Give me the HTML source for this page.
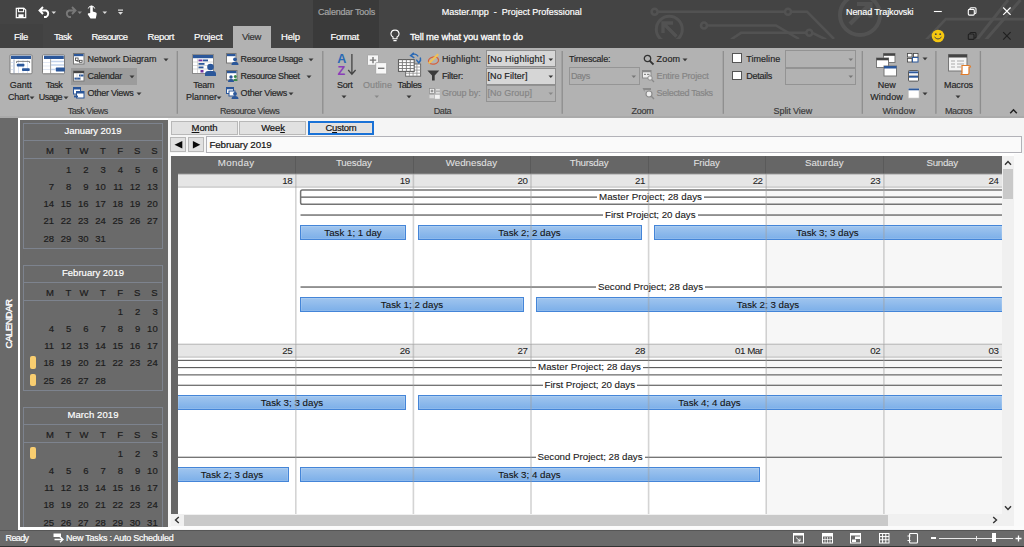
<!DOCTYPE html>
<html lang="en">
<head>
<meta charset="utf-8">
<title>Master.mpp - Project Professional</title>
<style>
html,body{margin:0;padding:0;}
body{width:1024px;height:547px;overflow:hidden;position:relative;background:#f5f5f5;font-family:"Liberation Sans", sans-serif;font-size:9px;}
.b{position:absolute;box-sizing:border-box;display:block;}
.t{position:absolute;white-space:pre;display:block;-webkit-text-stroke:0.18px;}
u{text-decoration:underline;}
</style>
</head>
<body>
<!-- title bar -->
<div class="b" style="left:0.00px;top:0.00px;width:1024.00px;height:48.00px;background:#444444;"></div>
<div class="b" style="left:0.00px;top:24.00px;width:43.00px;height:24.00px;background:#414141;"></div>
<div class="b" style="left:313.00px;top:0.00px;width:65.50px;height:48.00px;background:#3a3a3a;"></div>
<svg class="b" style="left:640.00px;top:0.00px" width="384" height="39" viewBox="640 0 384 39">
<g fill="none" stroke="#525252" stroke-width="2.6">
<path d="M657.600 11.700 H785 M791 11.700 H807 L834 39"/>
<path d="M707 25.500 H776 L799 39"/>
<path d="M731 39.500 L741 32.800 H806.300 M812.300 32.800 L826 39.500"/>
<circle cx="654.600" cy="11.700" r="3"/><circle cx="788" cy="11.700" r="3"/><circle cx="704" cy="25.500" r="3"/><circle cx="809.300" cy="32.800" r="3"/>
<circle cx="669.300" cy="29.300" r="13" stroke-width="3"/>
<path d="M676.500 36.500 L663.500 23.500 M663 33 V23 H673" stroke-width="3.400"/>
<circle cx="860" cy="15" r="20" stroke-width="4"/>
<path d="M850 24 L869 5 M857 4 H870.500 V17.500" stroke-width="4.200"/>
<path d="M926 40 L945.800 19.100 H1024"/>
<path d="M976.500 40 L1008 0 M985.600 40 L1020.500 0" stroke-width="3"/>
</g></svg>
<svg class="b" style="left:14.50px;top:6.50px" width="12" height="12" viewBox="0 0 14 14"><path d="M1.5 1.5 H10.5 L12.5 3.5 V12.5 H1.5 Z" fill="none" stroke="#fff" stroke-width="1.4"/><rect x="4" y="1.5" width="6" height="4" fill="none" stroke="#fff" stroke-width="1.2"/><rect x="4" y="8.5" width="6" height="4" fill="#fff"/></svg>
<svg class="b" style="left:38.00px;top:6.00px" width="14" height="12" viewBox="0 0 14 12"><path d="M5 1 L1.5 4.5 L5 8 M1.5 4.5 H8 A3.5 3.5 0 0 1 8 11 H6" fill="none" stroke="#fff" stroke-width="1.9"/></svg>
<svg class="b" style="left:51.20px;top:10.85px" width="5.6" height="3.8" viewBox="0 0 5.6 3.8"><path d="M0.5 0.5 L5.10 0.5 L2.80 3.10 Z" fill="#ddd"/></svg>
<svg class="b" style="left:63.00px;top:6.00px" width="14" height="12" viewBox="0 0 14 12"><path d="M9 1 L12.5 4.5 L9 8 M12.5 4.5 H6 A3.5 3.5 0 0 0 6 11 H8" fill="none" stroke="#787878" stroke-width="1.9"/></svg>
<svg class="b" style="left:76.70px;top:10.85px" width="5.6" height="3.8" viewBox="0 0 5.6 3.8"><path d="M0.5 0.5 L5.10 0.5 L2.80 3.10 Z" fill="#888"/></svg>
<svg class="b" style="left:86.00px;top:4.00px" width="12" height="16" viewBox="0 0 12 16"><path d="M4.2 9 V3 A1.3 1.3 0 0 1 6.8 3 V7.5 L10 8.5 Q11 9 10.6 10.5 L9.8 14.5 H4.5 L1.8 10.5 Q1.6 9 3 9.3 Z" fill="#fff"/><path d="M2.3 4.5 A3.3 3.3 0 0 1 8.7 4.5" fill="none" stroke="#fff" stroke-width="1"/></svg>
<svg class="b" style="left:102.20px;top:10.85px" width="5.6" height="3.8" viewBox="0 0 5.6 3.8"><path d="M0.5 0.5 L5.10 0.5 L2.80 3.10 Z" fill="#ddd"/></svg>
<svg class="b" style="left:117.00px;top:9.00px" width="7" height="7" viewBox="0 0 7 7"><rect x="1" y="0.5" width="5" height="1.2" fill="#ddd"/><path d="M1 3 H6 L3.5 5.8 Z" fill="#ddd"/></svg>
<span class="t" style="top:5.50px;height:13px;line-height:13px;font-size:9px;color:#a6a6a6;left:318.00px;letter-spacing:-0.205px;">Calendar Tools</span>
<span class="t" style="top:5.50px;height:13px;line-height:13px;font-size:9px;color:#ffffff;left:441.70px;letter-spacing:-0.002px;">Master.mpp  -  Project Professional</span>
<span class="t" style="top:5.50px;height:13px;line-height:13px;font-size:9px;color:#ffffff;left:846.00px;letter-spacing:-0.096px;">Nenad Trajkovski</span>
<svg class="b" style="left:932.00px;top:6.00px" width="12" height="12" viewBox="932 6 12 12"><path d="M933.900 11.500 H941.800" stroke="#fff" stroke-width="1.100"/></svg>
<svg class="b" style="left:966.00px;top:5.00px" width="13" height="13" viewBox="966 5 13 13"><rect x="968.300" y="9.400" width="6" height="5.700" rx="1" fill="none" stroke="#fff" stroke-width="1.100"/><path d="M970 9.400 V8.800 Q970 7.800 971 7.800 H975 Q976 7.800 976 8.800 V12.500 Q976 13.500 975 13.500 H974.300" fill="none" stroke="#fff" stroke-width="1.100"/></svg>
<svg class="b" style="left:1001.00px;top:5.00px" width="13" height="13" viewBox="1001 5 13 13"><path d="M1003.200 7.500 L1010.600 14.900 M1010.600 7.500 L1003.200 14.900" stroke="#fff" stroke-width="1.200"/></svg>
<svg class="b" style="left:930.80px;top:29.00px" width="14" height="14" viewBox="0 0 14 14"><circle cx="7" cy="7" r="6.300" fill="#f5c710"/><circle cx="4.8" cy="5.2" r="0.9" fill="#444"/><circle cx="9.2" cy="5.2" r="0.9" fill="#444"/><path d="M3.5 8 Q7 12 10.5 8" fill="none" stroke="#444" stroke-width="1"/></svg>
<svg class="b" style="left:966.00px;top:30.00px" width="13" height="13" viewBox="966 30 13 13"><rect x="968.300" y="34" width="5.700" height="5.400" rx="1" fill="none" stroke="#202020" stroke-width="1.100"/><path d="M970 34 V33.500 Q970 32.500 971 32.500 H975 Q976 32.500 976 33.500 V37 Q976 38 975 38 H974" fill="none" stroke="#202020" stroke-width="1.100"/></svg>
<svg class="b" style="left:1001.00px;top:30.00px" width="13" height="13" viewBox="1001 30 13 13"><path d="M1003.200 32.200 L1010.600 39.600 M1010.600 32.200 L1003.200 39.600" stroke="#202020" stroke-width="1.200"/></svg>
<div class="b" style="left:233.00px;top:26.00px;width:37.50px;height:22.00px;background:#b2b2b2;"></div>
<span class="t" style="top:30.00px;height:13px;line-height:13px;font-size:9.5px;color:#ffffff;left:14.00px;letter-spacing:-0.328px;">File</span>
<span class="t" style="top:30.00px;height:13px;line-height:13px;font-size:9.5px;color:#ffffff;left:54.00px;letter-spacing:-0.512px;">Task</span>
<span class="t" style="top:30.00px;height:13px;line-height:13px;font-size:9.5px;color:#ffffff;left:91.50px;letter-spacing:-0.584px;">Resource</span>
<span class="t" style="top:30.00px;height:13px;line-height:13px;font-size:9.5px;color:#ffffff;left:147.50px;letter-spacing:-0.336px;">Report</span>
<span class="t" style="top:30.00px;height:13px;line-height:13px;font-size:9.5px;color:#ffffff;left:194.00px;letter-spacing:-0.154px;">Project</span>
<span class="t" style="top:30.00px;height:13px;line-height:13px;font-size:9.5px;color:#ffffff;left:281.00px;letter-spacing:-0.137px;">Help</span>
<span class="t" style="top:30.00px;height:13px;line-height:13px;font-size:9.5px;color:#ffffff;left:330.50px;letter-spacing:-0.266px;">Format</span>
<span class="t" style="top:30.00px;height:13px;line-height:13px;font-size:9.5px;color:#333;left:242.00px;letter-spacing:-0.355px;">View</span>
<svg class="b" style="left:390.00px;top:29.00px" width="10" height="14" viewBox="0 0 10 14"><path d="M5 1.2 A3.6 3.6 0 0 1 7 8 V9.8 H3 V8 A3.6 3.6 0 0 1 5 1.2 Z M3.4 11.6 H6.6" fill="none" stroke="#fff" stroke-width="1.1"/></svg>
<span class="t" style="top:30.00px;height:13px;line-height:13px;font-size:9.5px;color:#ffffff;left:410.00px;letter-spacing:-0.157px;-webkit-text-stroke-width:0.3px;">Tell me what you want to do</span>
<!-- ribbon -->
<div class="b" style="left:0.00px;top:48.00px;width:1024.00px;height:69.60px;background:#b2b2b2;"></div>
<div class="b" style="left:0.00px;top:116.00px;width:1024.00px;height:1.60px;background:#aaaaaa;"></div>
<svg class="b" style="left:176.00px;top:51.00px" width="4" height="63" viewBox="176 51 4 63"><rect x="176.65" y="51" width="1.3" height="62.8" fill="#8d8d8d"/></svg>
<svg class="b" style="left:321.00px;top:51.00px" width="4" height="63" viewBox="321 51 4 63"><rect x="322.15" y="51" width="1.3" height="62.8" fill="#8d8d8d"/></svg>
<svg class="b" style="left:561.00px;top:51.00px" width="4" height="63" viewBox="561 51 4 63"><rect x="561.55" y="51" width="1.3" height="62.8" fill="#8d8d8d"/></svg>
<svg class="b" style="left:722.00px;top:51.00px" width="4" height="63" viewBox="722 51 4 63"><rect x="722.65" y="51" width="1.3" height="62.8" fill="#8d8d8d"/></svg>
<svg class="b" style="left:861.00px;top:51.00px" width="4" height="63" viewBox="861 51 4 63"><rect x="861.65" y="51" width="1.3" height="62.8" fill="#8d8d8d"/></svg>
<svg class="b" style="left:934.00px;top:51.00px" width="4" height="63" viewBox="934 51 4 63"><rect x="935.25" y="51" width="1.3" height="62.8" fill="#8d8d8d"/></svg>
<svg class="b" style="left:979.00px;top:51.00px" width="4" height="63" viewBox="979 51 4 63"><rect x="979.75" y="51" width="1.3" height="62.8" fill="#8d8d8d"/></svg>
<span class="t" style="top:104.70px;height:13px;line-height:13px;font-size:9px;color:#3a3a3a;left:67.80px;letter-spacing:-0.486px;">Task Views</span>
<span class="t" style="top:104.70px;height:13px;line-height:13px;font-size:9px;color:#3a3a3a;left:220.00px;letter-spacing:-0.384px;">Resource Views</span>
<span class="t" style="top:104.70px;height:13px;line-height:13px;font-size:9px;color:#3a3a3a;left:433.70px;letter-spacing:-0.379px;">Data</span>
<span class="t" style="top:104.70px;height:13px;line-height:13px;font-size:9px;color:#3a3a3a;left:631.50px;letter-spacing:-0.254px;">Zoom</span>
<span class="t" style="top:104.70px;height:13px;line-height:13px;font-size:9px;color:#3a3a3a;left:773.60px;letter-spacing:-0.086px;">Split View</span>
<span class="t" style="top:104.70px;height:13px;line-height:13px;font-size:9px;color:#3a3a3a;left:882.40px;letter-spacing:0.164px;">Window</span>
<span class="t" style="top:104.70px;height:13px;line-height:13px;font-size:9px;color:#3a3a3a;left:945.00px;letter-spacing:-0.419px;">Macros</span>
<svg class="b" style="left:1009.00px;top:108.00px" width="9" height="7" viewBox="0 0 9 7"><path d="M1.2 5.2 L4.5 1.8 L7.8 5.2" fill="none" stroke="#222" stroke-width="1.5"/></svg>
<svg class="b" style="left:8.00px;top:53.00px" width="26" height="23" viewBox="8 53 26 23"><rect x="10" y="54.800" width="22" height="19" rx="1" fill="#fff" stroke="#7c7c7c" stroke-width="1"/><rect x="11" y="55.700" width="20" height="3.300" fill="#2b579a"/>
<path d="M14 59.500 V73.500" stroke="#7a8aa8" stroke-width="0.800"/><path d="M11 62.500 H14 M11 66 H14 M11 69.500 H14 M18.500 60 V73 M23 60 V73 M27.500 60 V73" stroke="#c8d6ee" stroke-width="0.700"/>
<path d="M16.600 63 V61.400 H29.600 V63" fill="none" stroke="#666" stroke-width="0.800"/>
<rect x="16.800" y="63.800" width="7.600" height="2.800" rx="0.800" fill="#2b579a"/><rect x="22" y="68.300" width="7.700" height="2.800" rx="0.800" fill="#2b579a"/></svg>
<span class="t" style="top:78.50px;height:13px;line-height:13px;font-size:9px;color:#262626;left:20.70px;width:200px;margin-left:-100px;text-align:center;letter-spacing:-0.003px;">Gantt</span>
<span class="t" style="top:90.50px;height:13px;line-height:13px;font-size:9px;color:#262626;left:18.50px;width:200px;margin-left:-100px;text-align:center;letter-spacing:-0.203px;">Chart</span>
<svg class="b" style="left:29.00px;top:95.65px" width="6.0" height="4.0" viewBox="0 0 6.0 4.0"><path d="M0.5 0.5 L5.50 0.5 L3.00 3.30 Z" fill="#383838"/></svg>
<svg class="b" style="left:40.00px;top:53.00px" width="27" height="23" viewBox="40 53 27 23"><rect x="42.500" y="54.800" width="22" height="19" rx="1" fill="#fff" stroke="#7c7c7c" stroke-width="1"/><rect x="44" y="55.700" width="19.800" height="3.300" fill="#2b579a"/>
<path d="M50.600 59.200 V73.500" stroke="#8a8a8a" stroke-width="0.800"/>
<path d="M51 61.500 H64 M51 65 H64 M51 69.500 H55.500" stroke="#c3d3ec" stroke-width="1.400"/><path d="M43 62.500 H50 M43 66 H50 M43 69.500 H50" stroke="#d5dff0" stroke-width="0.700"/>
<rect x="55.800" y="67.600" width="9" height="3.800" rx="0.600" fill="#2b579a"/></svg>
<span class="t" style="top:78.50px;height:13px;line-height:13px;font-size:9px;color:#262626;left:54.00px;width:200px;margin-left:-100px;text-align:center;letter-spacing:-0.504px;">Task</span>
<span class="t" style="top:90.50px;height:13px;line-height:13px;font-size:9px;color:#262626;left:50.40px;width:200px;margin-left:-100px;text-align:center;letter-spacing:-0.543px;">Usage</span>
<svg class="b" style="left:63.30px;top:95.65px" width="6.0" height="4.0" viewBox="0 0 6.0 4.0"><path d="M0.5 0.5 L5.50 0.5 L3.00 3.30 Z" fill="#383838"/></svg>
<div class="b" style="left:71.00px;top:68.00px;width:66.00px;height:16.50px;background:#9c9c9c;"></div>
<svg class="b" style="left:73.00px;top:53.00px" width="12" height="12" viewBox="0 0 12 12"><rect x="0.5" y="0.5" width="10.5" height="10.5" fill="#fff" stroke="#777"/><rect x="1" y="1" width="9.5" height="2.2" fill="#2b579a"/><rect x="2.5" y="5" width="2.6" height="2.4" fill="none" stroke="#444" stroke-width="0.8"/><rect x="6.5" y="7.3" width="2.6" height="2" fill="none" stroke="#444" stroke-width="0.8"/><path d="M3.8 7.4 V8.3 H6.5" fill="none" stroke="#444" stroke-width="0.7"/></svg>
<span class="t" style="top:52.70px;height:13px;line-height:13px;font-size:9px;color:#262626;left:87.50px;letter-spacing:-0.035px;">Network Diagram</span>
<svg class="b" style="left:163.00px;top:57.85px" width="6.0" height="4.0" viewBox="0 0 6.0 4.0"><path d="M0.5 0.5 L5.50 0.5 L3.00 3.30 Z" fill="#383838"/></svg>
<svg class="b" style="left:73.00px;top:70.00px" width="12" height="12" viewBox="0 0 12 12"><rect x="0.5" y="1" width="10.5" height="10" fill="#fff" stroke="#777"/><rect x="0.5" y="1" width="10.5" height="2.2" fill="#444"/><rect x="6" y="4.5" width="4.5" height="2" fill="#2b579a"/><rect x="1.5" y="7.6" width="6" height="2" fill="#2b579a"/><path d="M4 3 V11 M7.5 3 V11" stroke="#bbb" stroke-width="0.5"/></svg>
<span class="t" style="top:69.90px;height:13px;line-height:13px;font-size:9px;color:#262626;left:87.50px;letter-spacing:-0.254px;">Calendar</span>
<svg class="b" style="left:128.50px;top:75.05px" width="6.0" height="4.0" viewBox="0 0 6.0 4.0"><path d="M0.5 0.5 L5.50 0.5 L3.00 3.30 Z" fill="#383838"/></svg>
<svg class="b" style="left:73.00px;top:87.00px" width="12" height="12" viewBox="0 0 12 12"><rect x="0.5" y="0.5" width="7" height="6.5" fill="#fff" stroke="#2b579a"/><rect x="0.5" y="0.5" width="7" height="2" fill="#2b579a"/><rect x="3.5" y="4.5" width="7.5" height="6.5" fill="#fff" stroke="#2b579a"/><rect x="3.5" y="4.5" width="7.5" height="2" fill="#2b579a"/><rect x="1" y="8.6" width="4" height="1.8" fill="#2b579a"/></svg>
<span class="t" style="top:87.10px;height:13px;line-height:13px;font-size:9px;color:#262626;left:87.50px;letter-spacing:-0.260px;">Other Views</span>
<svg class="b" style="left:135.70px;top:92.25px" width="6.0" height="4.0" viewBox="0 0 6.0 4.0"><path d="M0.5 0.5 L5.50 0.5 L3.00 3.30 Z" fill="#383838"/></svg>
<svg class="b" style="left:191.50px;top:54.00px" width="24" height="22" viewBox="0 0 24 22"><rect x="0.5" y="0.5" width="21" height="19" fill="#fff" stroke="#8a8a8a"/><rect x="1" y="1" width="20" height="3.2" fill="#2b579a"/>
<path d="M5.5 4.5 V19 M1 8 H21 M1 11.5 H21 M1 15 H21" stroke="#c9c9c9" stroke-width="0.7"/>
<rect x="6.5" y="5.5" width="4" height="1.8" fill="#7030a0"/><rect x="11" y="5.5" width="5" height="1.8" fill="#2b579a"/><rect x="6.5" y="9" width="6" height="1.8" fill="#2b579a"/><rect x="6.5" y="12.5" width="5" height="1.8" fill="#2b579a"/><rect x="8.5" y="16" width="3" height="2.5" fill="#7030a0"/>
<circle cx="18.5" cy="13" r="3.3" fill="#2b579a"/><path d="M13 22 V20 Q13 17 16 17 H21 Q24 17 24 20 V22 Z" fill="#2b579a"/></svg>
<span class="t" style="top:78.50px;height:13px;line-height:13px;font-size:9px;color:#262626;left:203.80px;width:200px;margin-left:-100px;text-align:center;letter-spacing:-0.254px;">Team</span>
<span class="t" style="top:90.50px;height:13px;line-height:13px;font-size:9px;color:#262626;left:201.50px;width:200px;margin-left:-100px;text-align:center;letter-spacing:-0.004px;">Planner</span>
<svg class="b" style="left:216.30px;top:95.65px" width="6.0" height="4.0" viewBox="0 0 6.0 4.0"><path d="M0.5 0.5 L5.50 0.5 L3.00 3.30 Z" fill="#383838"/></svg>
<svg class="b" style="left:226.00px;top:53.00px" width="13" height="12" viewBox="0 0 13 12"><rect x="0.5" y="0.5" width="9.5" height="9.5" fill="#fff" stroke="#777"/><rect x="1" y="1" width="8.5" height="2.2" fill="#2b579a"/><circle cx="9" cy="6.3" r="1.9" fill="#2b579a"/><path d="M5.5 12 Q5.5 8.7 9 8.7 Q12.5 8.700 12.5 12 Z" fill="#2b579a"/></svg>
<span class="t" style="top:52.70px;height:13px;line-height:13px;font-size:9px;color:#262626;left:240.60px;letter-spacing:-0.360px;">Resource Usage</span>
<svg class="b" style="left:308.40px;top:57.85px" width="6.0" height="4.0" viewBox="0 0 6.0 4.0"><path d="M0.5 0.5 L5.50 0.5 L3.00 3.30 Z" fill="#383838"/></svg>
<svg class="b" style="left:226.00px;top:70.00px" width="13" height="12" viewBox="0 0 13 12"><rect x="0.5" y="0.5" width="10.5" height="9.5" fill="#fff" stroke="#777"/><rect x="1" y="1" width="9.500" height="2.2" fill="#2b579a"/><circle cx="5" cy="7" r="1.7" fill="#2b579a"/><path d="M2 12 Q2 9 5 9 Q8 9 8 12 Z" fill="#2b579a"/><circle cx="9.3" cy="6.5" r="1.5" fill="#3a8a4a"/><path d="M7.500 11 Q7.5 8.5 9.5 8.5 Q11.5 8.5 11.5 11 Z" fill="#3a8a4a"/></svg>
<span class="t" style="top:69.90px;height:13px;line-height:13px;font-size:9px;color:#262626;left:240.60px;letter-spacing:-0.396px;">Resource Sheet</span>
<svg class="b" style="left:306.40px;top:75.05px" width="6.0" height="4.0" viewBox="0 0 6.0 4.0"><path d="M0.5 0.5 L5.50 0.5 L3.00 3.30 Z" fill="#383838"/></svg>
<svg class="b" style="left:226.00px;top:87.00px" width="13" height="12" viewBox="0 0 13 12"><rect x="0.5" y="0.5" width="7" height="6" fill="#fff" stroke="#2b579a"/><rect x="0.5" y="0.5" width="7" height="1.800" fill="#2b579a"/><rect x="3" y="4" width="6" height="5" fill="#fff" stroke="#2b579a"/><circle cx="9" cy="6.8" r="1.9" fill="#2b579a"/><path d="M5.5 12 Q5.5 9 9 9 Q12.5 9 12.5 12 Z" fill="#2b579a"/></svg>
<span class="t" style="top:87.10px;height:13px;line-height:13px;font-size:9px;color:#262626;left:240.60px;letter-spacing:-0.214px;">Other Views</span>
<svg class="b" style="left:288.40px;top:92.25px" width="6.0" height="4.0" viewBox="0 0 6.0 4.0"><path d="M0.5 0.5 L5.50 0.5 L3.00 3.30 Z" fill="#383838"/></svg>
<svg class="b" style="left:336.00px;top:52.00px" width="22" height="25" viewBox="336 52 22 25"><text x="337.2" y="63.4" font-size="12.6" font-weight="bold" fill="#2a69b5" font-family="Liberation Sans, sans-serif">A</text><text x="337.6" y="74.8" font-size="12.6" font-weight="bold" fill="#8a3db8" font-family="Liberation Sans, sans-serif">Z</text><path d="M351.9 54 V73.8 M348.2 70 L351.9 74.2 L355.6 70" fill="none" stroke="#444" stroke-width="1.3"/></svg>
<span class="t" style="top:78.50px;height:13px;line-height:13px;font-size:9px;color:#262626;left:344.80px;width:200px;margin-left:-100px;text-align:center;letter-spacing:-0.254px;">Sort</span>
<svg class="b" style="left:341.20px;top:94.75px" width="6.0" height="4.0" viewBox="0 0 6.0 4.0"><path d="M0.5 0.5 L5.50 0.5 L3.00 3.30 Z" fill="#383838"/></svg>
<svg class="b" style="left:366.00px;top:53.00px" width="23" height="23" viewBox="366 53 23 23"><rect x="367.5" y="54.9" width="11" height="10.4" rx="0.8" fill="#f6f6f6" stroke="#a4a4a4" stroke-width="0.9"/><path d="M369.8 60.1 H376.2 M373 56.9 V63.3" stroke="#777" stroke-width="1.4"/><rect x="375.7" y="62.6" width="11" height="11.4" rx="0.8" fill="#f8f8f8" stroke="#a4a4a4" stroke-width="0.9"/><path d="M378 68.3 H384.4" stroke="#777" stroke-width="1.4"/></svg>
<span class="t" style="top:78.50px;height:13px;line-height:13px;font-size:9px;color:#858585;left:377.50px;width:200px;margin-left:-100px;text-align:center;letter-spacing:0.067px;">Outline</span>
<svg class="b" style="left:373.90px;top:94.85px" width="5.6" height="3.8" viewBox="0 0 5.6 3.8"><path d="M0.5 0.5 L5.10 0.5 L2.80 3.10 Z" fill="#888"/></svg>
<svg class="b" style="left:397.00px;top:51.00px" width="26" height="27" viewBox="397 51 26 27"><rect x="405.6" y="64" width="15" height="12.2" fill="#fff" stroke="#6a6a6a" stroke-width="1"/><path d="M405.600 67 H420.600 M405.600 70.100 H420.600 M405.600 73.200 H420.600 M409.400 64 V76.200 M413.100 64 V76.200 M416.900 64 V76.200" stroke="#8a8a8a" stroke-width="0.800"/>
<rect x="398.500" y="59.600" width="15.700" height="11.800" fill="#fff" stroke="#5e5e5e" stroke-width="1.100"/><path d="M398.500 62.600 H414.200 M398.500 65.500 H414.200 M398.500 68.500 H414.200 M402.400 59.600 V71.400 M406.400 59.600 V71.400 M410.300 59.600 V71.400" stroke="#777" stroke-width="0.900"/>
<path d="M411.200 55.600 Q415 52.300 418.200 56.400 M413.800 52.800 L410.600 55.700 L414.300 57.800 M420.300 57.500 Q421.200 61.200 418.800 62.600 M416.300 59.600 L418.700 62.800 L421 60" fill="none" stroke="#2a69b5" stroke-width="1.400"/></svg>
<span class="t" style="top:78.50px;height:13px;line-height:13px;font-size:9px;color:#262626;left:409.50px;width:200px;margin-left:-100px;text-align:center;letter-spacing:-0.336px;">Tables</span>
<svg class="b" style="left:406.00px;top:94.75px" width="6.0" height="4.0" viewBox="0 0 6.0 4.0"><path d="M0.5 0.5 L5.50 0.5 L3.00 3.30 Z" fill="#383838"/></svg>
<svg class="b" style="left:426.00px;top:52.00px" width="15" height="14" viewBox="426 52 15 14"><ellipse cx="433.500" cy="60.600" rx="5.100" ry="3.500" fill="none" stroke="#d6613c" stroke-width="1.300" transform="rotate(-12 433.500 60.600)"/><path d="M428.800 63.300 L438.200 54.200" stroke="#f1c255" stroke-width="2.100"/></svg>
<span class="t" style="top:52.70px;height:13px;line-height:13px;font-size:9px;color:#262626;left:441.90px;letter-spacing:0.187px;">Highlight:</span>
<svg class="b" style="left:426.00px;top:69.00px" width="15" height="13" viewBox="426 69 15 13"><path d="M427.400 70.500 H439.300 L434.700 75.600 V80.600 H432 V75.600 Z" fill="#3a3a3a"/></svg>
<span class="t" style="top:69.90px;height:13px;line-height:13px;font-size:9px;color:#262626;left:441.90px;letter-spacing:-0.200px;">Filter:</span>
<svg class="b" style="left:428.00px;top:87.00px" width="14" height="13" viewBox="428 87 14 13"><rect x="429.500" y="88.500" width="5" height="5" fill="#ececec" stroke="#8a8a8a" stroke-width="0.700"/><path d="M430.600 91 H433.400 M432 89.600 V92.400" stroke="#666" stroke-width="0.800"/><rect x="436" y="89" width="3.800" height="1.500" fill="#dcdcdc"/><rect x="436" y="92" width="3.800" height="1.500" fill="#dcdcdc"/><rect x="429.500" y="95" width="4.500" height="3.300" fill="#d8d8d8"/><rect x="434.800" y="94.800" width="5" height="4" fill="#f2f2f2"/></svg>
<span class="t" style="top:87.10px;height:13px;line-height:13px;font-size:9px;color:#858585;left:441.90px;letter-spacing:-0.092px;">Group by:</span>
<div class="b" style="left:485.60px;top:50.40px;width:70.80px;height:16.70px;background:#d6d6d6;border:1px solid #8e8e8e;"></div>
<span class="t" style="top:52.70px;height:13px;line-height:13px;font-size:9px;color:#222;left:487.50px;letter-spacing:0.269px;">[No Highlight]</span>
<svg class="b" style="left:548.20px;top:57.95px" width="5.6" height="3.8" viewBox="0 0 5.6 3.8"><path d="M0.5 0.5 L5.10 0.5 L2.80 3.10 Z" fill="#333"/></svg>
<div class="b" style="left:485.60px;top:68.00px;width:70.80px;height:16.50px;background:#d6d6d6;border:1px solid #8e8e8e;"></div>
<span class="t" style="top:69.90px;height:13px;line-height:13px;font-size:9px;color:#222;left:487.50px;letter-spacing:0.089px;">[No Filter]</span>
<svg class="b" style="left:548.20px;top:75.15px" width="5.6" height="3.8" viewBox="0 0 5.6 3.8"><path d="M0.5 0.5 L5.10 0.5 L2.80 3.10 Z" fill="#333"/></svg>
<div class="b" style="left:485.60px;top:85.40px;width:70.80px;height:16.30px;background:#b2b2b2;border:1px solid #929292;"></div>
<span class="t" style="top:87.10px;height:13px;line-height:13px;font-size:9px;color:#858585;left:487.50px;letter-spacing:0.047px;">[No Group]</span>
<svg class="b" style="left:548.20px;top:92.35px" width="5.6" height="3.8" viewBox="0 0 5.6 3.8"><path d="M0.5 0.5 L5.10 0.5 L2.80 3.10 Z" fill="#888"/></svg>
<span class="t" style="top:52.70px;height:13px;line-height:13px;font-size:9px;color:#262626;left:569.00px;letter-spacing:-0.189px;">Timescale:</span>
<div class="b" style="left:568.60px;top:67.40px;width:71.10px;height:17.20px;background:#b2b2b2;border:1px solid #959595;"></div>
<span class="t" style="top:69.90px;height:13px;line-height:13px;font-size:9px;color:#808080;left:571.00px;letter-spacing:-0.454px;">Days</span>
<svg class="b" style="left:631.40px;top:75.15px" width="5.6" height="3.8" viewBox="0 0 5.6 3.8"><path d="M0.5 0.5 L5.10 0.5 L2.80 3.10 Z" fill="#777"/></svg>
<svg class="b" style="left:643.00px;top:53.50px" width="12" height="12" viewBox="0 0 12 12"><circle cx="4.500" cy="4.500" r="3.200" fill="none" stroke="#333" stroke-width="1.300"/><path d="M6.800 6.800 L10.500 10.500" stroke="#333" stroke-width="1.800"/></svg>
<span class="t" style="top:52.70px;height:13px;line-height:13px;font-size:9px;color:#262626;left:656.60px;letter-spacing:0.171px;">Zoom</span>
<svg class="b" style="left:681.50px;top:57.85px" width="6.0" height="4.0" viewBox="0 0 6.0 4.0"><path d="M0.5 0.5 L5.50 0.5 L3.00 3.30 Z" fill="#383838"/></svg>
<svg class="b" style="left:642.00px;top:70.00px" width="13" height="13" viewBox="0 0 13 13"><rect x="0.500" y="0.500" width="8.500" height="7.500" fill="#eee" stroke="#8a8a8a"/><rect x="0.5" y="0.500" width="8.500" height="1.800" fill="#8a8a8a"/><rect x="2" y="3.800" width="2" height="1.200" fill="#888"/><rect x="5" y="3.800" width="2.500" height="1.200" fill="#888"/><circle cx="8" cy="8" r="2.200" fill="#eee" stroke="#8a8a8a"/><path d="M9.800 9.800 L12 12" stroke="#8a8a8a" stroke-width="1.300"/></svg>
<span class="t" style="top:69.90px;height:13px;line-height:13px;font-size:9px;color:#858585;left:656.60px;letter-spacing:-0.138px;">Entire Project</span>
<svg class="b" style="left:642.00px;top:87.00px" width="13" height="13" viewBox="0 0 13 13"><path d="M0.500 1 H9 V3 H2.500 V5 Z" fill="#8a8a8a"/><circle cx="7" cy="7" r="3" fill="#eee" stroke="#8a8a8a" stroke-width="1.200"/><path d="M9.300 9.300 L12 12" stroke="#8a8a8a" stroke-width="1.500"/></svg>
<span class="t" style="top:87.10px;height:13px;line-height:13px;font-size:9px;color:#858585;left:656.60px;letter-spacing:-0.298px;">Selected Tasks</span>
<div class="b" style="left:731.90px;top:53.40px;width:10.00px;height:9.70px;background:#ffffff;border:1px solid #555;"></div>
<span class="t" style="top:52.70px;height:13px;line-height:13px;font-size:9px;color:#262626;left:746.25px;letter-spacing:0.039px;">Timeline</span>
<div class="b" style="left:731.90px;top:70.60px;width:10.00px;height:9.70px;background:#ffffff;border:1px solid #555;"></div>
<span class="t" style="top:69.90px;height:13px;line-height:13px;font-size:9px;color:#262626;left:746.25px;letter-spacing:-0.245px;">Details</span>
<div class="b" style="left:785.30px;top:50.00px;width:71.20px;height:17.60px;background:#b2b2b2;border:1px solid #939393;"></div>
<svg class="b" style="left:848.20px;top:57.95px" width="5.6" height="3.8" viewBox="0 0 5.6 3.8"><path d="M0.5 0.5 L5.10 0.5 L2.80 3.10 Z" fill="#777"/></svg>
<div class="b" style="left:785.30px;top:67.60px;width:71.20px;height:17.40px;background:#b2b2b2;border:1px solid #939393;"></div>
<svg class="b" style="left:848.20px;top:75.15px" width="5.6" height="3.8" viewBox="0 0 5.6 3.8"><path d="M0.5 0.5 L5.10 0.5 L2.80 3.10 Z" fill="#777"/></svg>
<svg class="b" style="left:876.00px;top:53.00px" width="22" height="24" viewBox="0 0 22 24"><rect x="7.500" y="0.500" width="11.500" height="9" fill="#fff" stroke="#777"/><rect x="7.500" y="0.500" width="11.500" height="2.300" fill="#444"/>
<rect x="0.500" y="5" width="12" height="9.500" fill="#fff" stroke="#777"/><rect x="0.500" y="5" width="12" height="2.300" fill="#444"/>
<rect x="8" y="13" width="12.500" height="10" fill="#fff" stroke="#777"/><rect x="8" y="13" width="12.500" height="2.500" fill="#2b579a"/></svg>
<span class="t" style="top:78.50px;height:13px;line-height:13px;font-size:9px;color:#262626;left:886.70px;width:200px;margin-left:-100px;text-align:center;letter-spacing:-0.005px;">New</span>
<span class="t" style="top:90.50px;height:13px;line-height:13px;font-size:9px;color:#262626;left:886.60px;width:200px;margin-left:-100px;text-align:center;letter-spacing:0.131px;">Window</span>
<svg class="b" style="left:907.00px;top:53.00px" width="13" height="11" viewBox="0 0 13 11"><rect x="0.500" y="0.500" width="4.500" height="3.500" fill="#fff" stroke="#444" stroke-width="0.800"/><rect x="6.500" y="0.500" width="4.500" height="3.500" fill="#fff" stroke="#444" stroke-width="0.800"/><rect x="0.500" y="5.500" width="4.500" height="3.500" fill="#fff" stroke="#444" stroke-width="0.800"/><rect x="5.500" y="4.500" width="5.500" height="4.500" fill="#fff" stroke="#2b579a" stroke-width="1"/></svg>
<svg class="b" style="left:921.60px;top:56.75px" width="6.0" height="4.0" viewBox="0 0 6.0 4.0"><path d="M0.5 0.5 L5.50 0.5 L3.00 3.30 Z" fill="#383838"/></svg>
<svg class="b" style="left:908.00px;top:69.50px" width="12" height="12" viewBox="0 0 12 12"><rect x="0.5" y="0.5" width="10" height="10.6" rx="0.8" fill="#fff" stroke="#4c4c4c" stroke-width="0.9"/><rect x="1" y="1.4" width="9" height="1.9" fill="#2b579a"/><rect x="1" y="5.8" width="9" height="1.900" fill="#2b579a"/><path d="M0.500 5.300 H10.500" stroke="#777" stroke-width="0.500"/></svg>
<svg class="b" style="left:907.50px;top:87.50px" width="12" height="12" viewBox="0 0 12 12"><rect x="0.500" y="0.500" width="10.500" height="9.500" fill="#fff" stroke="#ccc" stroke-width="0.600"/><rect x="0.500" y="0.500" width="10.500" height="1.800" fill="#2b579a"/></svg>
<svg class="b" style="left:921.60px;top:91.55px" width="6.0" height="4.0" viewBox="0 0 6.0 4.0"><path d="M0.5 0.5 L5.50 0.5 L3.00 3.30 Z" fill="#383838"/></svg>
<svg class="b" style="left:947.50px;top:54.00px" width="24" height="21" viewBox="0 0 24 21"><rect x="0.500" y="0.500" width="18.500" height="16.500" fill="#f4f4f4" stroke="#777"/><rect x="0.500" y="0.500" width="18.500" height="3" fill="#444"/>
<path d="M3 7 H7 M9 7 H16 M3 10 H7 M9 10 H16 M3 13 H7 M9 13 H13" stroke="#aaa" stroke-width="1"/>
<path d="M14 11.500 H21 Q22.500 11.500 22.500 13 H21 V19 Q21 20.500 19.500 20.500 H12.500 Q14 20.500 14 19 Z" fill="#fff" stroke="#e07a28" stroke-width="1.200"/></svg>
<span class="t" style="top:78.50px;height:13px;line-height:13px;font-size:9px;color:#262626;left:958.50px;width:200px;margin-left:-100px;text-align:center;letter-spacing:-0.086px;">Macros</span>
<svg class="b" style="left:955.20px;top:94.75px" width="6.0" height="4.0" viewBox="0 0 6.0 4.0"><path d="M0.5 0.5 L5.50 0.5 L3.00 3.30 Z" fill="#383838"/></svg>
<!-- side bar -->
<div class="b" style="left:0.00px;top:117.60px;width:1024.00px;height:412.00px;background:#6a6a6a;"></div>
<div class="b" style="left:18.00px;top:117.60px;width:152.60px;height:412.00px;background:#ffffff;"></div>
<div class="b" style="left:20.20px;top:120.10px;width:147.60px;height:406.90px;background:#6a6a6a;"></div>
<div class="b" style="left:167.80px;top:117.60px;width:856.20px;height:412.00px;background:#f5f5f5;"></div>
<span class="t" style="top:316.80px;height:14px;line-height:14px;font-size:9.75px;color:#ffffff;left:9.30px;width:200px;margin-left:-100px;text-align:center;letter-spacing:-0.514px;transform:rotate(-90deg);-webkit-text-stroke-width:0.35px;">CALENDAR</span>
<div class="b" style="left:23.00px;top:123.00px;width:140.00px;height:125.50px;border:1px solid #7d838e;"></div>
<div class="b" style="left:23.00px;top:140.00px;width:140.00px;height:1.00px;background:#7d838e;"></div>
<div class="b" style="left:23.00px;top:158.00px;width:140.00px;height:1.00px;background:#7d838e;"></div>
<span class="t" style="top:124.20px;height:13px;line-height:13px;font-size:9.5px;color:#ffffff;left:93.00px;width:200px;margin-left:-100px;text-align:center;letter-spacing:-0.048px;">January 2019</span>
<span class="t" style="top:143.70px;height:13px;line-height:13px;font-size:9.5px;color:#1c1c1c;left:54.00px;width:200px;margin-left:-200px;text-align:right;">M</span>
<span class="t" style="top:143.70px;height:13px;line-height:13px;font-size:9.5px;color:#1c1c1c;left:71.28px;width:200px;margin-left:-200px;text-align:right;">T</span>
<span class="t" style="top:143.70px;height:13px;line-height:13px;font-size:9.5px;color:#1c1c1c;left:88.56px;width:200px;margin-left:-200px;text-align:right;">W</span>
<span class="t" style="top:143.70px;height:13px;line-height:13px;font-size:9.5px;color:#1c1c1c;left:105.84px;width:200px;margin-left:-200px;text-align:right;">T</span>
<span class="t" style="top:143.70px;height:13px;line-height:13px;font-size:9.5px;color:#1c1c1c;left:123.12px;width:200px;margin-left:-200px;text-align:right;">F</span>
<span class="t" style="top:143.70px;height:13px;line-height:13px;font-size:9.5px;color:#1c1c1c;left:140.40px;width:200px;margin-left:-200px;text-align:right;">S</span>
<span class="t" style="top:143.70px;height:13px;line-height:13px;font-size:9.5px;color:#1c1c1c;left:157.68px;width:200px;margin-left:-200px;text-align:right;">S</span>
<span class="t" style="top:162.70px;height:13px;line-height:13px;font-size:9.5px;color:#1c1c1c;left:71.28px;width:200px;margin-left:-200px;text-align:right;">1</span>
<span class="t" style="top:162.70px;height:13px;line-height:13px;font-size:9.5px;color:#1c1c1c;left:88.56px;width:200px;margin-left:-200px;text-align:right;">2</span>
<span class="t" style="top:162.70px;height:13px;line-height:13px;font-size:9.5px;color:#1c1c1c;left:105.84px;width:200px;margin-left:-200px;text-align:right;">3</span>
<span class="t" style="top:162.70px;height:13px;line-height:13px;font-size:9.5px;color:#1c1c1c;left:123.12px;width:200px;margin-left:-200px;text-align:right;">4</span>
<span class="t" style="top:162.70px;height:13px;line-height:13px;font-size:9.5px;color:#1c1c1c;left:140.40px;width:200px;margin-left:-200px;text-align:right;">5</span>
<span class="t" style="top:162.70px;height:13px;line-height:13px;font-size:9.5px;color:#1c1c1c;left:157.68px;width:200px;margin-left:-200px;text-align:right;">6</span>
<span class="t" style="top:179.95px;height:13px;line-height:13px;font-size:9.5px;color:#1c1c1c;left:54.00px;width:200px;margin-left:-200px;text-align:right;">7</span>
<span class="t" style="top:179.95px;height:13px;line-height:13px;font-size:9.5px;color:#1c1c1c;left:71.28px;width:200px;margin-left:-200px;text-align:right;">8</span>
<span class="t" style="top:179.95px;height:13px;line-height:13px;font-size:9.5px;color:#1c1c1c;left:88.56px;width:200px;margin-left:-200px;text-align:right;">9</span>
<span class="t" style="top:179.95px;height:13px;line-height:13px;font-size:9.5px;color:#1c1c1c;left:105.84px;width:200px;margin-left:-200px;text-align:right;">10</span>
<span class="t" style="top:179.95px;height:13px;line-height:13px;font-size:9.5px;color:#1c1c1c;left:123.12px;width:200px;margin-left:-200px;text-align:right;">11</span>
<span class="t" style="top:179.95px;height:13px;line-height:13px;font-size:9.5px;color:#1c1c1c;left:140.40px;width:200px;margin-left:-200px;text-align:right;">12</span>
<span class="t" style="top:179.95px;height:13px;line-height:13px;font-size:9.5px;color:#1c1c1c;left:157.68px;width:200px;margin-left:-200px;text-align:right;">13</span>
<span class="t" style="top:197.20px;height:13px;line-height:13px;font-size:9.5px;color:#1c1c1c;left:54.00px;width:200px;margin-left:-200px;text-align:right;">14</span>
<span class="t" style="top:197.20px;height:13px;line-height:13px;font-size:9.5px;color:#1c1c1c;left:71.28px;width:200px;margin-left:-200px;text-align:right;">15</span>
<span class="t" style="top:197.20px;height:13px;line-height:13px;font-size:9.5px;color:#1c1c1c;left:88.56px;width:200px;margin-left:-200px;text-align:right;">16</span>
<span class="t" style="top:197.20px;height:13px;line-height:13px;font-size:9.5px;color:#1c1c1c;left:105.84px;width:200px;margin-left:-200px;text-align:right;">17</span>
<span class="t" style="top:197.20px;height:13px;line-height:13px;font-size:9.5px;color:#1c1c1c;left:123.12px;width:200px;margin-left:-200px;text-align:right;">18</span>
<span class="t" style="top:197.20px;height:13px;line-height:13px;font-size:9.5px;color:#1c1c1c;left:140.40px;width:200px;margin-left:-200px;text-align:right;">19</span>
<span class="t" style="top:197.20px;height:13px;line-height:13px;font-size:9.5px;color:#1c1c1c;left:157.68px;width:200px;margin-left:-200px;text-align:right;">20</span>
<span class="t" style="top:214.45px;height:13px;line-height:13px;font-size:9.5px;color:#1c1c1c;left:54.00px;width:200px;margin-left:-200px;text-align:right;">21</span>
<span class="t" style="top:214.45px;height:13px;line-height:13px;font-size:9.5px;color:#1c1c1c;left:71.28px;width:200px;margin-left:-200px;text-align:right;">22</span>
<span class="t" style="top:214.45px;height:13px;line-height:13px;font-size:9.5px;color:#1c1c1c;left:88.56px;width:200px;margin-left:-200px;text-align:right;">23</span>
<span class="t" style="top:214.45px;height:13px;line-height:13px;font-size:9.5px;color:#1c1c1c;left:105.84px;width:200px;margin-left:-200px;text-align:right;">24</span>
<span class="t" style="top:214.45px;height:13px;line-height:13px;font-size:9.5px;color:#1c1c1c;left:123.12px;width:200px;margin-left:-200px;text-align:right;">25</span>
<span class="t" style="top:214.45px;height:13px;line-height:13px;font-size:9.5px;color:#1c1c1c;left:140.40px;width:200px;margin-left:-200px;text-align:right;">26</span>
<span class="t" style="top:214.45px;height:13px;line-height:13px;font-size:9.5px;color:#1c1c1c;left:157.68px;width:200px;margin-left:-200px;text-align:right;">27</span>
<span class="t" style="top:231.70px;height:13px;line-height:13px;font-size:9.5px;color:#1c1c1c;left:54.00px;width:200px;margin-left:-200px;text-align:right;">28</span>
<span class="t" style="top:231.70px;height:13px;line-height:13px;font-size:9.5px;color:#1c1c1c;left:71.28px;width:200px;margin-left:-200px;text-align:right;">29</span>
<span class="t" style="top:231.70px;height:13px;line-height:13px;font-size:9.5px;color:#1c1c1c;left:88.56px;width:200px;margin-left:-200px;text-align:right;">30</span>
<span class="t" style="top:231.70px;height:13px;line-height:13px;font-size:9.5px;color:#1c1c1c;left:105.84px;width:200px;margin-left:-200px;text-align:right;">31</span>
<div class="b" style="left:23.00px;top:265.00px;width:140.00px;height:125.50px;border:1px solid #7d838e;"></div>
<div class="b" style="left:23.00px;top:282.00px;width:140.00px;height:1.00px;background:#7d838e;"></div>
<div class="b" style="left:23.00px;top:300.00px;width:140.00px;height:1.00px;background:#7d838e;"></div>
<span class="t" style="top:266.20px;height:13px;line-height:13px;font-size:9.5px;color:#ffffff;left:93.00px;width:200px;margin-left:-100px;text-align:center;letter-spacing:0.016px;">February 2019</span>
<span class="t" style="top:285.70px;height:13px;line-height:13px;font-size:9.5px;color:#1c1c1c;left:54.00px;width:200px;margin-left:-200px;text-align:right;">M</span>
<span class="t" style="top:285.70px;height:13px;line-height:13px;font-size:9.5px;color:#1c1c1c;left:71.28px;width:200px;margin-left:-200px;text-align:right;">T</span>
<span class="t" style="top:285.70px;height:13px;line-height:13px;font-size:9.5px;color:#1c1c1c;left:88.56px;width:200px;margin-left:-200px;text-align:right;">W</span>
<span class="t" style="top:285.70px;height:13px;line-height:13px;font-size:9.5px;color:#1c1c1c;left:105.84px;width:200px;margin-left:-200px;text-align:right;">T</span>
<span class="t" style="top:285.70px;height:13px;line-height:13px;font-size:9.5px;color:#1c1c1c;left:123.12px;width:200px;margin-left:-200px;text-align:right;">F</span>
<span class="t" style="top:285.70px;height:13px;line-height:13px;font-size:9.5px;color:#1c1c1c;left:140.40px;width:200px;margin-left:-200px;text-align:right;">S</span>
<span class="t" style="top:285.70px;height:13px;line-height:13px;font-size:9.5px;color:#1c1c1c;left:157.68px;width:200px;margin-left:-200px;text-align:right;">S</span>
<span class="t" style="top:304.70px;height:13px;line-height:13px;font-size:9.5px;color:#1c1c1c;left:123.12px;width:200px;margin-left:-200px;text-align:right;">1</span>
<span class="t" style="top:304.70px;height:13px;line-height:13px;font-size:9.5px;color:#1c1c1c;left:140.40px;width:200px;margin-left:-200px;text-align:right;">2</span>
<span class="t" style="top:304.70px;height:13px;line-height:13px;font-size:9.5px;color:#1c1c1c;left:157.68px;width:200px;margin-left:-200px;text-align:right;">3</span>
<span class="t" style="top:321.95px;height:13px;line-height:13px;font-size:9.5px;color:#1c1c1c;left:54.00px;width:200px;margin-left:-200px;text-align:right;">4</span>
<span class="t" style="top:321.95px;height:13px;line-height:13px;font-size:9.5px;color:#1c1c1c;left:71.28px;width:200px;margin-left:-200px;text-align:right;">5</span>
<span class="t" style="top:321.95px;height:13px;line-height:13px;font-size:9.5px;color:#1c1c1c;left:88.56px;width:200px;margin-left:-200px;text-align:right;">6</span>
<span class="t" style="top:321.95px;height:13px;line-height:13px;font-size:9.5px;color:#1c1c1c;left:105.84px;width:200px;margin-left:-200px;text-align:right;">7</span>
<span class="t" style="top:321.95px;height:13px;line-height:13px;font-size:9.5px;color:#1c1c1c;left:123.12px;width:200px;margin-left:-200px;text-align:right;">8</span>
<span class="t" style="top:321.95px;height:13px;line-height:13px;font-size:9.5px;color:#1c1c1c;left:140.40px;width:200px;margin-left:-200px;text-align:right;">9</span>
<span class="t" style="top:321.95px;height:13px;line-height:13px;font-size:9.5px;color:#1c1c1c;left:157.68px;width:200px;margin-left:-200px;text-align:right;">10</span>
<span class="t" style="top:339.20px;height:13px;line-height:13px;font-size:9.5px;color:#1c1c1c;left:54.00px;width:200px;margin-left:-200px;text-align:right;">11</span>
<span class="t" style="top:339.20px;height:13px;line-height:13px;font-size:9.5px;color:#1c1c1c;left:71.28px;width:200px;margin-left:-200px;text-align:right;">12</span>
<span class="t" style="top:339.20px;height:13px;line-height:13px;font-size:9.5px;color:#1c1c1c;left:88.56px;width:200px;margin-left:-200px;text-align:right;">13</span>
<span class="t" style="top:339.20px;height:13px;line-height:13px;font-size:9.5px;color:#1c1c1c;left:105.84px;width:200px;margin-left:-200px;text-align:right;">14</span>
<span class="t" style="top:339.20px;height:13px;line-height:13px;font-size:9.5px;color:#1c1c1c;left:123.12px;width:200px;margin-left:-200px;text-align:right;">15</span>
<span class="t" style="top:339.20px;height:13px;line-height:13px;font-size:9.5px;color:#1c1c1c;left:140.40px;width:200px;margin-left:-200px;text-align:right;">16</span>
<span class="t" style="top:339.20px;height:13px;line-height:13px;font-size:9.5px;color:#1c1c1c;left:157.68px;width:200px;margin-left:-200px;text-align:right;">17</span>
<span class="t" style="top:356.45px;height:13px;line-height:13px;font-size:9.5px;color:#1c1c1c;left:54.00px;width:200px;margin-left:-200px;text-align:right;">18</span>
<span class="t" style="top:356.45px;height:13px;line-height:13px;font-size:9.5px;color:#1c1c1c;left:71.28px;width:200px;margin-left:-200px;text-align:right;">19</span>
<span class="t" style="top:356.45px;height:13px;line-height:13px;font-size:9.5px;color:#1c1c1c;left:88.56px;width:200px;margin-left:-200px;text-align:right;">20</span>
<span class="t" style="top:356.45px;height:13px;line-height:13px;font-size:9.5px;color:#1c1c1c;left:105.84px;width:200px;margin-left:-200px;text-align:right;">21</span>
<span class="t" style="top:356.45px;height:13px;line-height:13px;font-size:9.5px;color:#1c1c1c;left:123.12px;width:200px;margin-left:-200px;text-align:right;">22</span>
<span class="t" style="top:356.45px;height:13px;line-height:13px;font-size:9.5px;color:#1c1c1c;left:140.40px;width:200px;margin-left:-200px;text-align:right;">23</span>
<span class="t" style="top:356.45px;height:13px;line-height:13px;font-size:9.5px;color:#1c1c1c;left:157.68px;width:200px;margin-left:-200px;text-align:right;">24</span>
<div class="b" style="left:30.00px;top:356.35px;width:6.10px;height:12.70px;background:#f9ce70;border-radius:2px;"></div>
<span class="t" style="top:373.70px;height:13px;line-height:13px;font-size:9.5px;color:#1c1c1c;left:54.00px;width:200px;margin-left:-200px;text-align:right;">25</span>
<span class="t" style="top:373.70px;height:13px;line-height:13px;font-size:9.5px;color:#1c1c1c;left:71.28px;width:200px;margin-left:-200px;text-align:right;">26</span>
<span class="t" style="top:373.70px;height:13px;line-height:13px;font-size:9.5px;color:#1c1c1c;left:88.56px;width:200px;margin-left:-200px;text-align:right;">27</span>
<span class="t" style="top:373.70px;height:13px;line-height:13px;font-size:9.5px;color:#1c1c1c;left:105.84px;width:200px;margin-left:-200px;text-align:right;">28</span>
<div class="b" style="left:30.00px;top:373.60px;width:6.10px;height:12.70px;background:#f9ce70;border-radius:2px;"></div>
<div class="b" style="left:23.00px;top:407.00px;width:140.00px;height:125.50px;border:1px solid #7d838e;"></div>
<div class="b" style="left:23.00px;top:424.00px;width:140.00px;height:1.00px;background:#7d838e;"></div>
<div class="b" style="left:23.00px;top:442.00px;width:140.00px;height:1.00px;background:#7d838e;"></div>
<span class="t" style="top:408.20px;height:13px;line-height:13px;font-size:9.5px;color:#ffffff;left:93.00px;width:200px;margin-left:-100px;text-align:center;letter-spacing:0.083px;">March 2019</span>
<span class="t" style="top:427.70px;height:13px;line-height:13px;font-size:9.5px;color:#1c1c1c;left:54.00px;width:200px;margin-left:-200px;text-align:right;">M</span>
<span class="t" style="top:427.70px;height:13px;line-height:13px;font-size:9.5px;color:#1c1c1c;left:71.28px;width:200px;margin-left:-200px;text-align:right;">T</span>
<span class="t" style="top:427.70px;height:13px;line-height:13px;font-size:9.5px;color:#1c1c1c;left:88.56px;width:200px;margin-left:-200px;text-align:right;">W</span>
<span class="t" style="top:427.70px;height:13px;line-height:13px;font-size:9.5px;color:#1c1c1c;left:105.84px;width:200px;margin-left:-200px;text-align:right;">T</span>
<span class="t" style="top:427.70px;height:13px;line-height:13px;font-size:9.5px;color:#1c1c1c;left:123.12px;width:200px;margin-left:-200px;text-align:right;">F</span>
<span class="t" style="top:427.70px;height:13px;line-height:13px;font-size:9.5px;color:#1c1c1c;left:140.40px;width:200px;margin-left:-200px;text-align:right;">S</span>
<span class="t" style="top:427.70px;height:13px;line-height:13px;font-size:9.5px;color:#1c1c1c;left:157.68px;width:200px;margin-left:-200px;text-align:right;">S</span>
<span class="t" style="top:446.70px;height:13px;line-height:13px;font-size:9.5px;color:#1c1c1c;left:123.12px;width:200px;margin-left:-200px;text-align:right;">1</span>
<span class="t" style="top:446.70px;height:13px;line-height:13px;font-size:9.5px;color:#1c1c1c;left:140.40px;width:200px;margin-left:-200px;text-align:right;">2</span>
<span class="t" style="top:446.70px;height:13px;line-height:13px;font-size:9.5px;color:#1c1c1c;left:157.68px;width:200px;margin-left:-200px;text-align:right;">3</span>
<div class="b" style="left:30.00px;top:446.60px;width:6.10px;height:12.70px;background:#f9ce70;border-radius:2px;"></div>
<span class="t" style="top:463.95px;height:13px;line-height:13px;font-size:9.5px;color:#1c1c1c;left:54.00px;width:200px;margin-left:-200px;text-align:right;">4</span>
<span class="t" style="top:463.95px;height:13px;line-height:13px;font-size:9.5px;color:#1c1c1c;left:71.28px;width:200px;margin-left:-200px;text-align:right;">5</span>
<span class="t" style="top:463.95px;height:13px;line-height:13px;font-size:9.5px;color:#1c1c1c;left:88.56px;width:200px;margin-left:-200px;text-align:right;">6</span>
<span class="t" style="top:463.95px;height:13px;line-height:13px;font-size:9.5px;color:#1c1c1c;left:105.84px;width:200px;margin-left:-200px;text-align:right;">7</span>
<span class="t" style="top:463.95px;height:13px;line-height:13px;font-size:9.5px;color:#1c1c1c;left:123.12px;width:200px;margin-left:-200px;text-align:right;">8</span>
<span class="t" style="top:463.95px;height:13px;line-height:13px;font-size:9.5px;color:#1c1c1c;left:140.40px;width:200px;margin-left:-200px;text-align:right;">9</span>
<span class="t" style="top:463.95px;height:13px;line-height:13px;font-size:9.5px;color:#1c1c1c;left:157.68px;width:200px;margin-left:-200px;text-align:right;">10</span>
<span class="t" style="top:481.20px;height:13px;line-height:13px;font-size:9.5px;color:#1c1c1c;left:54.00px;width:200px;margin-left:-200px;text-align:right;">11</span>
<span class="t" style="top:481.20px;height:13px;line-height:13px;font-size:9.5px;color:#1c1c1c;left:71.28px;width:200px;margin-left:-200px;text-align:right;">12</span>
<span class="t" style="top:481.20px;height:13px;line-height:13px;font-size:9.5px;color:#1c1c1c;left:88.56px;width:200px;margin-left:-200px;text-align:right;">13</span>
<span class="t" style="top:481.20px;height:13px;line-height:13px;font-size:9.5px;color:#1c1c1c;left:105.84px;width:200px;margin-left:-200px;text-align:right;">14</span>
<span class="t" style="top:481.20px;height:13px;line-height:13px;font-size:9.5px;color:#1c1c1c;left:123.12px;width:200px;margin-left:-200px;text-align:right;">15</span>
<span class="t" style="top:481.20px;height:13px;line-height:13px;font-size:9.5px;color:#1c1c1c;left:140.40px;width:200px;margin-left:-200px;text-align:right;">16</span>
<span class="t" style="top:481.20px;height:13px;line-height:13px;font-size:9.5px;color:#1c1c1c;left:157.68px;width:200px;margin-left:-200px;text-align:right;">17</span>
<span class="t" style="top:498.45px;height:13px;line-height:13px;font-size:9.5px;color:#1c1c1c;left:54.00px;width:200px;margin-left:-200px;text-align:right;">18</span>
<span class="t" style="top:498.45px;height:13px;line-height:13px;font-size:9.5px;color:#1c1c1c;left:71.28px;width:200px;margin-left:-200px;text-align:right;">19</span>
<span class="t" style="top:498.45px;height:13px;line-height:13px;font-size:9.5px;color:#1c1c1c;left:88.56px;width:200px;margin-left:-200px;text-align:right;">20</span>
<span class="t" style="top:498.45px;height:13px;line-height:13px;font-size:9.5px;color:#1c1c1c;left:105.84px;width:200px;margin-left:-200px;text-align:right;">21</span>
<span class="t" style="top:498.45px;height:13px;line-height:13px;font-size:9.5px;color:#1c1c1c;left:123.12px;width:200px;margin-left:-200px;text-align:right;">22</span>
<span class="t" style="top:498.45px;height:13px;line-height:13px;font-size:9.5px;color:#1c1c1c;left:140.40px;width:200px;margin-left:-200px;text-align:right;">23</span>
<span class="t" style="top:498.45px;height:13px;line-height:13px;font-size:9.5px;color:#1c1c1c;left:157.68px;width:200px;margin-left:-200px;text-align:right;">24</span>
<span class="t" style="top:515.70px;height:13px;line-height:13px;font-size:9.5px;color:#1c1c1c;left:54.00px;width:200px;margin-left:-200px;text-align:right;">25</span>
<span class="t" style="top:515.70px;height:13px;line-height:13px;font-size:9.5px;color:#1c1c1c;left:71.28px;width:200px;margin-left:-200px;text-align:right;">26</span>
<span class="t" style="top:515.70px;height:13px;line-height:13px;font-size:9.5px;color:#1c1c1c;left:88.56px;width:200px;margin-left:-200px;text-align:right;">27</span>
<span class="t" style="top:515.70px;height:13px;line-height:13px;font-size:9.5px;color:#1c1c1c;left:105.84px;width:200px;margin-left:-200px;text-align:right;">28</span>
<span class="t" style="top:515.70px;height:13px;line-height:13px;font-size:9.5px;color:#1c1c1c;left:123.12px;width:200px;margin-left:-200px;text-align:right;">29</span>
<span class="t" style="top:515.70px;height:13px;line-height:13px;font-size:9.5px;color:#1c1c1c;left:140.40px;width:200px;margin-left:-200px;text-align:right;">30</span>
<span class="t" style="top:515.70px;height:13px;line-height:13px;font-size:9.5px;color:#1c1c1c;left:157.68px;width:200px;margin-left:-200px;text-align:right;">31</span>
<div class="b" style="left:20.50px;top:527.00px;width:150.00px;height:2.50px;background:#ffffff;"></div>
<!-- main calendar -->
<div class="b" style="left:171.00px;top:120.80px;width:66.50px;height:14.20px;background:#e1e1e1;border:1px solid #b8b8b8;"></div>
<span class="t" style="top:121.10px;height:13px;line-height:13px;font-size:9.5px;color:#111;left:204.50px;width:200px;margin-left:-100px;text-align:center;letter-spacing:-0.118px;"><u>M</u>onth</span>
<div class="b" style="left:239.30px;top:120.80px;width:66.50px;height:14.20px;background:#e1e1e1;border:1px solid #b8b8b8;"></div>
<span class="t" style="top:121.10px;height:13px;line-height:13px;font-size:9.5px;color:#111;left:273.00px;width:200px;margin-left:-100px;text-align:center;letter-spacing:-0.102px;">Wee<u>k</u></span>
<div class="b" style="left:307.80px;top:120.80px;width:66.40px;height:14.20px;background:#e1e1e1;border:2px solid #1a72d6;box-shadow:inset 0 0 0 0.6px #f1e6de;"></div>
<span class="t" style="top:121.10px;height:13px;line-height:13px;font-size:9.5px;color:#111;left:341.00px;width:200px;margin-left:-100px;text-align:center;letter-spacing:-0.290px;">C<u>u</u>stom</span>
<div class="b" style="left:170.40px;top:136.60px;width:15.60px;height:15.60px;background:#e1e1e1;border:1px solid #b8b8b8;"></div>
<svg class="b" style="left:172.00px;top:139.00px" width="12" height="12" viewBox="172 139 12 12"><path d="M182.300 141 V148.500 L174.500 144.750 Z" fill="#0a0a0a"/></svg>
<div class="b" style="left:188.40px;top:136.60px;width:15.40px;height:15.60px;background:#e1e1e1;border:1px solid #b8b8b8;"></div>
<svg class="b" style="left:190.00px;top:139.00px" width="12" height="12" viewBox="190 139 12 12"><path d="M192.900 141 V148.500 L200.300 144.750 Z" fill="#0a0a0a"/></svg>
<div class="b" style="left:170.40px;top:152.60px;width:851.20px;height:3.20px;background:#ffffff;"></div>
<div class="b" style="left:205.60px;top:136.40px;width:816.00px;height:16.20px;background:#fafafa;border:1px solid #b2b2b8;"></div>
<span class="t" style="top:137.80px;height:14px;line-height:14px;font-size:9.75px;color:#111;left:209.40px;letter-spacing:-0.086px;">February 2019</span>
<div class="b" style="left:170.80px;top:156.20px;width:830.90px;height:17.60px;background:#666666;"></div>
<div class="b" style="left:170.80px;top:156.20px;width:6.80px;height:357.50px;background:#666666;"></div>
<span class="t" style="top:156.30px;height:14px;line-height:14px;font-size:9.75px;color:#e2e2e2;left:236.10px;width:200px;margin-left:-100px;text-align:center;letter-spacing:0.302px;-webkit-text-stroke-width:0.05px;">Monday</span>
<span class="t" style="top:156.30px;height:14px;line-height:14px;font-size:9.75px;color:#e2e2e2;left:353.80px;width:200px;margin-left:-100px;text-align:center;letter-spacing:-0.192px;-webkit-text-stroke-width:0.05px;">Tuesday</span>
<div class="b" style="left:295.00px;top:156.20px;width:1.00px;height:17.60px;background:#5a5a5a;"></div>
<span class="t" style="top:156.30px;height:14px;line-height:14px;font-size:9.75px;color:#e2e2e2;left:471.40px;width:200px;margin-left:-100px;text-align:center;letter-spacing:-0.001px;-webkit-text-stroke-width:0.05px;">Wednesday</span>
<div class="b" style="left:412.60px;top:156.20px;width:1.00px;height:17.60px;background:#5a5a5a;"></div>
<span class="t" style="top:156.30px;height:14px;line-height:14px;font-size:9.75px;color:#e2e2e2;left:589.00px;width:200px;margin-left:-100px;text-align:center;letter-spacing:-0.270px;-webkit-text-stroke-width:0.05px;">Thursday</span>
<div class="b" style="left:530.20px;top:156.20px;width:1.00px;height:17.60px;background:#5a5a5a;"></div>
<span class="t" style="top:156.30px;height:14px;line-height:14px;font-size:9.75px;color:#e2e2e2;left:706.60px;width:200px;margin-left:-100px;text-align:center;letter-spacing:-0.182px;-webkit-text-stroke-width:0.05px;">Friday</span>
<div class="b" style="left:647.80px;top:156.20px;width:1.00px;height:17.60px;background:#5a5a5a;"></div>
<span class="t" style="top:156.30px;height:14px;line-height:14px;font-size:9.75px;color:#e2e2e2;left:824.25px;width:200px;margin-left:-100px;text-align:center;letter-spacing:-0.054px;-webkit-text-stroke-width:0.05px;">Saturday</span>
<div class="b" style="left:765.40px;top:156.20px;width:1.00px;height:17.60px;background:#5a5a5a;"></div>
<span class="t" style="top:156.30px;height:14px;line-height:14px;font-size:9.75px;color:#e2e2e2;left:942.15px;width:200px;margin-left:-100px;text-align:center;letter-spacing:-0.263px;-webkit-text-stroke-width:0.05px;">Sunday</span>
<div class="b" style="left:883.10px;top:156.20px;width:1.00px;height:17.60px;background:#5a5a5a;"></div>
<div class="b" style="left:177.70px;top:173.80px;width:824.00px;height:13.40px;background:#e6e6e6;"></div>
<div class="b" style="left:177.70px;top:187.20px;width:824.00px;height:156.50px;background:#ffffff;"></div>
<div class="b" style="left:766.40px;top:187.20px;width:235.30px;height:156.50px;background:#f7f7f7;"></div>
<svg class="b" style="left:177.70px;top:172.80px" width="824.0" height="170.9" viewBox="0 0 824.0 170.9"><g transform="translate(0,1)"><rect x="0.00" y="-0.30" width="824.00" height="1.00" fill="#b4b4b4"/><rect x="0.00" y="12.60" width="824.00" height="1.00" fill="#b9b9b9"/><rect x="122.60" y="15.95" width="824.00" height="14.40" rx="1.8" fill="none" stroke="#747474" stroke-width="1.50"/><rect x="122.50" y="22.40" width="701.50" height="1.50" fill="#747474"/><rect x="122.50" y="40.30" width="701.50" height="1.50" fill="#747474"/><rect x="122.50" y="112.30" width="701.50" height="1.50" fill="#747474"/></g></svg>
<span class="t" style="top:174.00px;height:14px;line-height:14px;font-size:9.75px;color:#222;left:292.20px;width:200px;margin-left:-200px;text-align:right;letter-spacing:-0.45px;-webkit-text-stroke-width:0.06px;">18</span>
<span class="t" style="top:174.00px;height:14px;line-height:14px;font-size:9.75px;color:#222;left:409.80px;width:200px;margin-left:-200px;text-align:right;letter-spacing:-0.45px;-webkit-text-stroke-width:0.06px;">19</span>
<span class="t" style="top:174.00px;height:14px;line-height:14px;font-size:9.75px;color:#222;left:527.40px;width:200px;margin-left:-200px;text-align:right;letter-spacing:-0.45px;-webkit-text-stroke-width:0.06px;">20</span>
<span class="t" style="top:174.00px;height:14px;line-height:14px;font-size:9.75px;color:#222;left:645.00px;width:200px;margin-left:-200px;text-align:right;letter-spacing:-0.45px;-webkit-text-stroke-width:0.06px;">21</span>
<span class="t" style="top:174.00px;height:14px;line-height:14px;font-size:9.75px;color:#222;left:762.60px;width:200px;margin-left:-200px;text-align:right;letter-spacing:-0.45px;-webkit-text-stroke-width:0.06px;">22</span>
<span class="t" style="top:174.00px;height:14px;line-height:14px;font-size:9.75px;color:#222;left:880.30px;width:200px;margin-left:-200px;text-align:right;letter-spacing:-0.45px;-webkit-text-stroke-width:0.06px;">23</span>
<span class="t" style="top:174.00px;height:14px;line-height:14px;font-size:9.75px;color:#222;left:998.40px;width:200px;margin-left:-200px;text-align:right;letter-spacing:-0.45px;-webkit-text-stroke-width:0.06px;">24</span>
<div class="b" style="left:597.00px;top:192.00px;width:107.00px;height:11.20px;background:#ffffff;"></div>
<span class="t" style="top:189.80px;height:14px;line-height:14px;font-size:9.75px;color:#1a1a1a;left:599.00px;letter-spacing:0.025px;-webkit-text-stroke-width:0.1px;">Master Project; 28 days</span>
<div class="b" style="left:603.00px;top:209.80px;width:94.50px;height:11.20px;background:#ffffff;"></div>
<span class="t" style="top:207.60px;height:14px;line-height:14px;font-size:9.75px;color:#1a1a1a;left:605.00px;letter-spacing:-0.049px;-webkit-text-stroke-width:0.1px;">First Project; 20 days</span>
<div class="b" style="left:596.00px;top:281.80px;width:109.00px;height:11.20px;background:#ffffff;"></div>
<span class="t" style="top:279.60px;height:14px;line-height:14px;font-size:9.75px;color:#1a1a1a;left:598.00px;letter-spacing:-0.031px;-webkit-text-stroke-width:0.1px;">Second Project; 28 days</span>
<div class="b" style="left:300.20px;top:225.20px;width:106.20px;height:15.00px;border:1px solid #4485d8;background:linear-gradient(#a0c5ee,#7cafe9);box-shadow:inset 0 0 0 1px rgba(255,255,255,0.12);"></div>
<span class="t" style="top:225.90px;height:14px;line-height:14px;font-size:9.75px;color:#141414;left:353.00px;width:200px;margin-left:-100px;text-align:center;-webkit-text-stroke-width:0.1px;">Task 1; 1 day</span>
<div class="b" style="left:418.00px;top:225.20px;width:223.90px;height:15.00px;border:1px solid #4485d8;background:linear-gradient(#a0c5ee,#7cafe9);box-shadow:inset 0 0 0 1px rgba(255,255,255,0.12);"></div>
<span class="t" style="top:225.90px;height:14px;line-height:14px;font-size:9.75px;color:#141414;left:529.50px;width:200px;margin-left:-100px;text-align:center;-webkit-text-stroke-width:0.1px;">Task 2; 2 days</span>
<div class="b" style="left:653.50px;top:225.20px;width:348.20px;height:15.00px;border:1px solid #4485d8;background:linear-gradient(#a0c5ee,#7cafe9);box-shadow:inset 0 0 0 1px rgba(255,255,255,0.12);border-right:none;"></div>
<span class="t" style="top:225.90px;height:14px;line-height:14px;font-size:9.75px;color:#141414;left:827.50px;width:200px;margin-left:-100px;text-align:center;-webkit-text-stroke-width:0.1px;">Task 3; 3 days</span>
<div class="b" style="left:300.20px;top:297.20px;width:223.70px;height:15.00px;border:1px solid #4485d8;background:linear-gradient(#a0c5ee,#7cafe9);box-shadow:inset 0 0 0 1px rgba(255,255,255,0.12);"></div>
<span class="t" style="top:297.90px;height:14px;line-height:14px;font-size:9.75px;color:#141414;left:412.00px;width:200px;margin-left:-100px;text-align:center;-webkit-text-stroke-width:0.1px;">Task 1; 2 days</span>
<div class="b" style="left:536.00px;top:297.20px;width:465.70px;height:15.00px;border:1px solid #4485d8;background:linear-gradient(#a0c5ee,#7cafe9);box-shadow:inset 0 0 0 1px rgba(255,255,255,0.12);border-right:none;"></div>
<span class="t" style="top:297.90px;height:14px;line-height:14px;font-size:9.75px;color:#141414;left:768.00px;width:200px;margin-left:-100px;text-align:center;-webkit-text-stroke-width:0.1px;">Task 2; 3 days</span>
<svg class="b" style="left:177.70px;top:173.80px" width="824.0" height="169.9" viewBox="0 0 824.0 169.9"><rect x="117.00" y="0" width="1.6" height="169.90" fill="rgba(160,160,160,0.45)"/><rect x="234.60" y="0" width="1.6" height="169.90" fill="rgba(160,160,160,0.45)"/><rect x="352.20" y="0" width="1.6" height="169.90" fill="rgba(160,160,160,0.45)"/><rect x="469.80" y="0" width="1.6" height="169.90" fill="rgba(160,160,160,0.45)"/><rect x="587.40" y="0" width="1.6" height="169.90" fill="rgba(160,160,160,0.45)"/><rect x="705.10" y="0" width="1.6" height="169.90" fill="rgba(160,160,160,0.45)"/></svg>
<div class="b" style="left:177.70px;top:343.70px;width:824.00px;height:13.40px;background:#e6e6e6;"></div>
<div class="b" style="left:177.70px;top:357.10px;width:824.00px;height:156.60px;background:#ffffff;"></div>
<div class="b" style="left:766.40px;top:357.10px;width:235.30px;height:156.60px;background:#f7f7f7;"></div>
<svg class="b" style="left:177.70px;top:342.70px" width="824.0" height="171.0" viewBox="0 0 824.0 171.0"><g transform="translate(0,1)"><rect x="0.00" y="-0.30" width="824.00" height="1.00" fill="#b4b4b4"/><rect x="0.00" y="12.60" width="824.00" height="1.00" fill="#b9b9b9"/><rect x="0.00" y="15.80" width="824.00" height="1.15" fill="#5e5e5e"/><rect x="0.00" y="23.00" width="824.00" height="1.15" fill="#5e5e5e"/><rect x="0.00" y="30.30" width="824.00" height="1.15" fill="#5e5e5e"/><rect x="0.00" y="40.70" width="824.00" height="1.15" fill="#5e5e5e"/><rect x="0.00" y="112.70" width="824.00" height="1.15" fill="#5e5e5e"/></g></svg>
<span class="t" style="top:343.90px;height:14px;line-height:14px;font-size:9.75px;color:#222;left:292.20px;width:200px;margin-left:-200px;text-align:right;letter-spacing:-0.45px;-webkit-text-stroke-width:0.06px;">25</span>
<span class="t" style="top:343.90px;height:14px;line-height:14px;font-size:9.75px;color:#222;left:409.80px;width:200px;margin-left:-200px;text-align:right;letter-spacing:-0.45px;-webkit-text-stroke-width:0.06px;">26</span>
<span class="t" style="top:343.90px;height:14px;line-height:14px;font-size:9.75px;color:#222;left:527.40px;width:200px;margin-left:-200px;text-align:right;letter-spacing:-0.45px;-webkit-text-stroke-width:0.06px;">27</span>
<span class="t" style="top:343.90px;height:14px;line-height:14px;font-size:9.75px;color:#222;left:645.00px;width:200px;margin-left:-200px;text-align:right;letter-spacing:-0.45px;-webkit-text-stroke-width:0.06px;">28</span>
<span class="t" style="top:343.90px;height:14px;line-height:14px;font-size:9.75px;color:#222;left:762.60px;width:200px;margin-left:-200px;text-align:right;letter-spacing:-0.45px;-webkit-text-stroke-width:0.06px;">01 Mar</span>
<span class="t" style="top:343.90px;height:14px;line-height:14px;font-size:9.75px;color:#222;left:880.30px;width:200px;margin-left:-200px;text-align:right;letter-spacing:-0.45px;-webkit-text-stroke-width:0.06px;">02</span>
<span class="t" style="top:343.90px;height:14px;line-height:14px;font-size:9.75px;color:#222;left:998.40px;width:200px;margin-left:-200px;text-align:right;letter-spacing:-0.45px;-webkit-text-stroke-width:0.06px;">03</span>
<div class="b" style="left:536.00px;top:361.90px;width:107.00px;height:11.20px;background:#ffffff;"></div>
<span class="t" style="top:359.70px;height:14px;line-height:14px;font-size:9.75px;color:#1a1a1a;left:538.00px;letter-spacing:0.025px;-webkit-text-stroke-width:0.1px;">Master Project; 28 days</span>
<div class="b" style="left:542.50px;top:379.70px;width:94.50px;height:11.20px;background:#ffffff;"></div>
<span class="t" style="top:377.50px;height:14px;line-height:14px;font-size:9.75px;color:#1a1a1a;left:544.50px;letter-spacing:-0.049px;-webkit-text-stroke-width:0.1px;">First Project; 20 days</span>
<div class="b" style="left:535.50px;top:451.70px;width:109.00px;height:11.20px;background:#ffffff;"></div>
<span class="t" style="top:449.50px;height:14px;line-height:14px;font-size:9.75px;color:#1a1a1a;left:537.50px;letter-spacing:-0.031px;-webkit-text-stroke-width:0.1px;">Second Project; 28 days</span>
<div class="b" style="left:177.70px;top:395.10px;width:228.70px;height:15.00px;border:1px solid #4485d8;background:linear-gradient(#a0c5ee,#7cafe9);box-shadow:inset 0 0 0 1px rgba(255,255,255,0.12);border-left:none;"></div>
<span class="t" style="top:395.80px;height:14px;line-height:14px;font-size:9.75px;color:#141414;left:292.00px;width:200px;margin-left:-100px;text-align:center;-webkit-text-stroke-width:0.1px;">Task 3; 3 days</span>
<div class="b" style="left:418.00px;top:395.10px;width:583.70px;height:15.00px;border:1px solid #4485d8;background:linear-gradient(#a0c5ee,#7cafe9);box-shadow:inset 0 0 0 1px rgba(255,255,255,0.12);border-right:none;"></div>
<span class="t" style="top:395.80px;height:14px;line-height:14px;font-size:9.75px;color:#141414;left:709.50px;width:200px;margin-left:-100px;text-align:center;-webkit-text-stroke-width:0.1px;">Task 4; 4 days</span>
<div class="b" style="left:177.70px;top:467.10px;width:111.20px;height:15.00px;border:1px solid #4485d8;background:linear-gradient(#a0c5ee,#7cafe9);box-shadow:inset 0 0 0 1px rgba(255,255,255,0.12);border-left:none;"></div>
<span class="t" style="top:467.80px;height:14px;line-height:14px;font-size:9.75px;color:#141414;left:232.00px;width:200px;margin-left:-100px;text-align:center;-webkit-text-stroke-width:0.1px;">Task 2; 3 days</span>
<div class="b" style="left:300.20px;top:467.10px;width:459.70px;height:15.00px;border:1px solid #4485d8;background:linear-gradient(#a0c5ee,#7cafe9);box-shadow:inset 0 0 0 1px rgba(255,255,255,0.12);"></div>
<span class="t" style="top:467.80px;height:14px;line-height:14px;font-size:9.75px;color:#141414;left:529.50px;width:200px;margin-left:-100px;text-align:center;-webkit-text-stroke-width:0.1px;">Task 3; 4 days</span>
<svg class="b" style="left:177.70px;top:343.70px" width="824.0" height="170.0" viewBox="0 0 824.0 170.0"><rect x="117.00" y="0" width="1.6" height="170.00" fill="rgba(160,160,160,0.45)"/><rect x="234.60" y="0" width="1.6" height="170.00" fill="rgba(160,160,160,0.45)"/><rect x="352.20" y="0" width="1.6" height="170.00" fill="rgba(160,160,160,0.45)"/><rect x="469.80" y="0" width="1.6" height="170.00" fill="rgba(160,160,160,0.45)"/><rect x="587.40" y="0" width="1.6" height="170.00" fill="rgba(160,160,160,0.45)"/><rect x="705.10" y="0" width="1.6" height="170.00" fill="rgba(160,160,160,0.45)"/></svg>
<div class="b" style="left:1002.00px;top:156.20px;width:12.00px;height:357.50px;background:#f0f0f0;"></div>
<div class="b" style="left:1002.70px;top:169.30px;width:10.50px;height:30.20px;background:#c9c9c9;"></div>
<svg class="b" style="left:1004.00px;top:160.00px" width="8" height="6" viewBox="0 0 8 6"><path d="M1 4.800 L4 1.500 L7 4.800" fill="none" stroke="#333" stroke-width="1.400"/></svg>
<svg class="b" style="left:1004.00px;top:505.00px" width="8" height="6" viewBox="0 0 8 6"><path d="M1 1.200 L4 4.500 L7 1.200" fill="none" stroke="#333" stroke-width="1.400"/></svg>
<div class="b" style="left:170.80px;top:513.70px;width:843.20px;height:12.50px;background:#f0f0f0;"></div>
<div class="b" style="left:183.50px;top:514.80px;width:704.50px;height:11.20px;background:#c9c9c9;"></div>
<svg class="b" style="left:174.00px;top:516.00px" width="6" height="8" viewBox="0 0 6 8"><path d="M4.800 1 L1.500 4 L4.800 7" fill="none" stroke="#333" stroke-width="1.400"/></svg>
<svg class="b" style="left:992.00px;top:516.00px" width="6" height="8" viewBox="0 0 6 8"><path d="M1.200 1 L4.500 4 L1.200 7" fill="none" stroke="#333" stroke-width="1.400"/></svg>
<div class="b" style="left:1014.00px;top:154.00px;width:10.00px;height:375.50px;background:#fafafa;"></div>
<div class="b" style="left:170.80px;top:526.20px;width:853.20px;height:3.30px;background:#fbfbfb;"></div>
<!-- status bar -->
<div class="b" style="left:0.00px;top:529.50px;width:1024.00px;height:17.50px;background:#6a6a6a;"></div>
<div class="b" style="left:0.00px;top:529.50px;width:1024.00px;height:1.00px;background:#565656;"></div>
<div class="b" style="left:0.00px;top:545.50px;width:1024.00px;height:1.50px;background:#333333;"></div>
<span class="t" style="top:531.70px;height:13px;line-height:13px;font-size:9px;color:#ffffff;left:5.50px;letter-spacing:-0.603px;">Ready</span>
<svg class="b" style="left:53.00px;top:532.00px" width="12" height="12" viewBox="0 0 12 12"><path d="M0.500 1.500 H8 V5 H0.500 Z" fill="#fff"/><path d="M1.500 7.500 H10 M7 4.800 L10 7.500 L7 10.200" fill="none" stroke="#fff" stroke-width="1.300"/></svg>
<span class="t" style="top:531.70px;height:13px;line-height:13px;font-size:9px;color:#ffffff;left:66.00px;letter-spacing:-0.246px;">New Tasks : Auto Scheduled</span>
<svg class="b" style="left:793.40px;top:532.50px" width="11" height="11" viewBox="0 0 11 11"><rect x="0.500" y="0.500" width="10" height="9.500" fill="none" stroke="#fff"/><rect x="0.500" y="0.500" width="10" height="2" fill="#fff"/><path d="M3 4.500 L7 8 M7 5.500 V8 H4.500" fill="none" stroke="#fff" stroke-width="0.900"/></svg>
<svg class="b" style="left:822.20px;top:532.50px" width="11" height="11" viewBox="0 0 11 11"><rect x="0.500" y="0.500" width="10" height="9.500" fill="none" stroke="#fff"/><rect x="0.500" y="0.500" width="10" height="3" fill="#fff"/><path d="M3 4 V10 M5.500 4 V10 M8 4 V10 M1 6.500 H10" stroke="#fff" stroke-width="0.700"/></svg>
<svg class="b" style="left:850.40px;top:532.50px" width="11" height="11" viewBox="0 0 11 11"><rect x="0.500" y="0.500" width="10" height="9.500" fill="none" stroke="#fff"/><rect x="0.500" y="0.500" width="10" height="2" fill="#fff"/><rect x="5" y="3.500" width="5" height="2.500" fill="#fff"/><rect x="2" y="6.500" width="4" height="2.500" fill="#fff"/></svg>
<svg class="b" style="left:878.50px;top:532.50px" width="11" height="11" viewBox="0 0 11 11"><rect x="0.500" y="0.500" width="9.500" height="9.500" fill="none" stroke="#fff"/><path d="M3.600 0.500 V10 M6.800 0.500 V10 M0.500 3.600 H10 M0.500 6.800 H10" stroke="#fff" stroke-width="1"/></svg>
<svg class="b" style="left:907.00px;top:532.50px" width="12" height="11" viewBox="0 0 12 11"><rect x="2.500" y="0.500" width="8" height="9.500" rx="1" fill="none" stroke="#fff" stroke-width="1.100"/><path d="M0.500 3 H3.500 M0.500 7.500 H3.500" stroke="#fff" stroke-width="1.100"/></svg>
<div class="b" style="left:931.00px;top:537.30px;width:4.50px;height:1.30px;background:#ffffff;"></div>
<div class="b" style="left:938.70px;top:537.50px;width:74.30px;height:1.00px;background:#e8e8e8;"></div>
<div class="b" style="left:976.00px;top:535.50px;width:1.00px;height:5.00px;background:#e8e8e8;"></div>
<div class="b" style="left:992.00px;top:533.00px;width:4.20px;height:9.00px;background:#ffffff;"></div>
<svg class="b" style="left:1015.00px;top:534.50px" width="7" height="7" viewBox="0 0 7 7"><path d="M3.500 0.500 V6.500 M0.500 3.500 H6.500" stroke="#fff" stroke-width="1.300"/></svg>
</body>
</html>
